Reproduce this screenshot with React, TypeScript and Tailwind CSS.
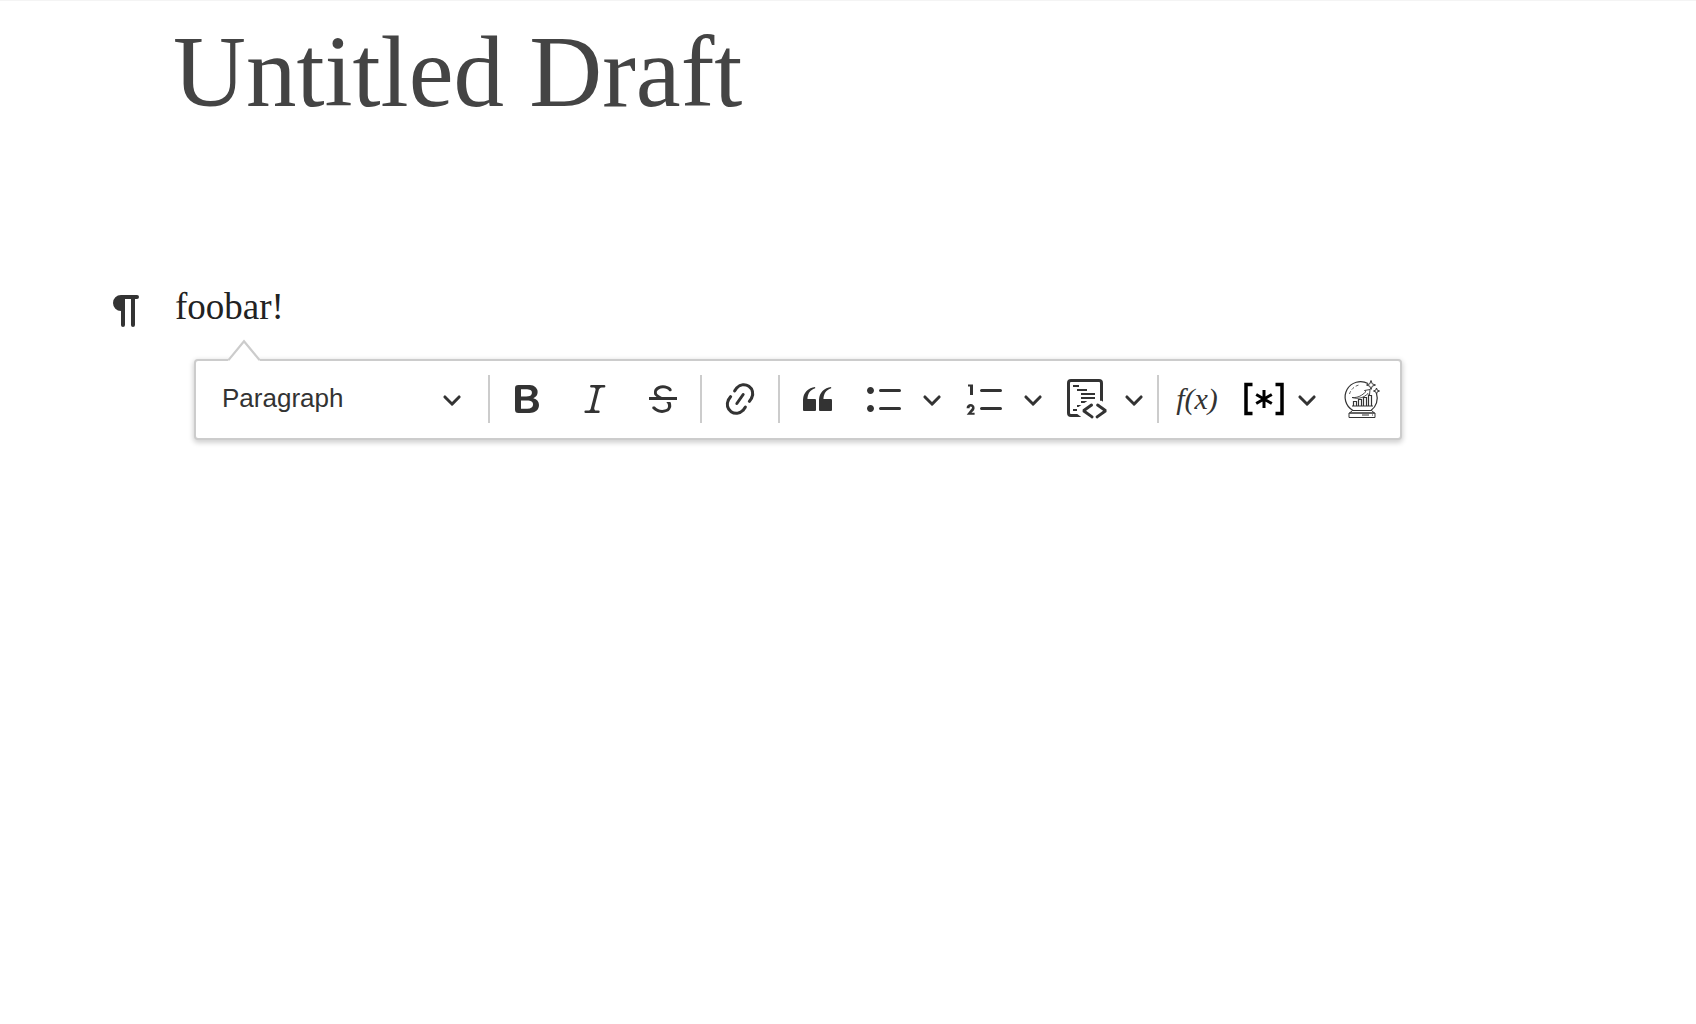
import type { ReactNode } from "react";

const LIST_LINES =
  "M7 5.75c0 .414.336.75.75.75h9.5a.75.75 0 1 0 0-1.5h-9.5a.75.75 0 0 0-.75.75zm0 9c0 .414.336.75.75.75h9.5a.75.75 0 1 0 0-1.5h-9.5a.75.75 0 0 0-.75.75z";

const PATHS = {
  pilcrow:
    "M6.999 2H15a1 1 0 0 1 0 2h-1.004v13a1 1 0 1 1-2 0V4H8.999v13a1 1 0 1 1-2 0v-7A4 4 0 0 1 3 6a4 4 0 0 1 3.999-4z",
  bold: "M10.187 17H5.773c-.637 0-1.092-.138-1.364-.415-.273-.277-.409-.718-.409-1.323V4.738c0-.617.14-1.062.419-1.332.279-.27.73-.406 1.354-.406h4.68c.69 0 1.288.041 1.793.124.506.083.96.242 1.36.478.341.197.644.447.906.75a3.262 3.262 0 0 1 .808 2.162c0 1.401-.722 2.426-2.167 3.075C15.05 10.175 16 11.315 16 13.01a3.756 3.756 0 0 1-2.296 3.504 6.1 6.1 0 0 1-1.517.377c-.571.073-1.238.11-2 .11zm-.217-6.217H7v4.087h3.069c1.977 0 2.965-.69 2.965-2.072 0-.707-.256-1.22-.768-1.537-.512-.319-1.277-.478-2.296-.478zM7 5.13v3.619h2.606c.729 0 1.292-.067 1.69-.2a1.6 1.6 0 0 0 .91-.765c.165-.267.247-.566.247-.897 0-.707-.26-1.176-.778-1.409-.519-.232-1.31-.348-2.375-.348H7z",
  italic:
    "m9.586 14.633.021.004c-.036.335.095.655.393.962.082.083.173.15.274.201h1.474a.6.6 0 1 1 0 1.2H5.304a.6.6 0 0 1 0-1.2h1.15c.474-.07.809-.182 1.005-.334.157-.122.291-.32.404-.597l2.416-9.55a1.053 1.053 0 0 0-.281-.823 1.12 1.12 0 0 0-.442-.296H8.15a.6.6 0 0 1 0-1.2h6.443a.6.6 0 1 1 0 1.2h-1.195c-.376.056-.65.155-.823.296-.215.175-.423.439-.623.79l-2.366 9.347z",
  strike:
    "M7 16.4c-.8-.4-1.5-.9-2.2-1.5a.6.6 0 0 1-.2-.5l.3-.6h1c1 1.2 2.1 1.7 3.7 1.7 1 0 1.8-.3 2.3-.6.6-.4.6-1.2.6-1.3.2-1.2-.9-2.1-.9-2.1h2.1c.3.7.4 1.2.4 1.7v.8l-.6 1.2c-.6.8-1.1 1-1.6 1.2a6 6 0 0 1-2.4.6c-1 0-1.8-.3-2.5-.6zM6.8 9L6 8.3c-.4-.5-.5-.8-.5-1.6 0-.7.1-1.3.5-1.8.4-.6 1-1 1.6-1.3a6.3 6.3 0 0 1 4.7 0 4 4 0 0 1 1.7 1l.3.7c0 .1.2.4-.2.7-.4.2-.9.1-1 0a3 3 0 0 0-1.2-1c-.4-.2-1-.3-2-.4-.7 0-1.4.2-2 .6-.8.6-1 .8-1 1.5 0 .8.5 1 1.2 1.5.6.4 1.1.7 1.9 1H6.8zM3 10.5V9h14v1.5z",
  link: "m11.077 15 .991-1.416a.75.75 0 1 1 1.229.86l-1.148 1.64a.748.748 0 0 1-.217.206 5.251 5.251 0 0 1-8.503-5.955.741.741 0 0 1 .12-.274l1.147-1.639a.75.75 0 1 1 1.228.86L4.933 10.7l.006.003a3.75 3.75 0 0 0 6.132 4.294l.006.004zm5.494-5.335a.748.748 0 0 1-.12.274l-1.147 1.639a.75.75 0 1 1-1.228-.86l.86-1.23a3.75 3.75 0 0 0-6.144-4.301l-.86 1.229a.75.75 0 0 1-1.229-.86l1.148-1.64a.748.748 0 0 1 .217-.206 5.251 5.251 0 0 1 8.503 5.955zm-4.563-2.532a.75.75 0 0 1 .184 1.045l-3.155 4.505a.75.75 0 1 1-1.229-.86l3.155-4.506a.75.75 0 0 1 1.045-.184z",
  quote:
    "M3 10.423a6.5 6.5 0 0 1 6.056-6.408l.038.67C6.448 5.423 5.354 7.663 5.22 10H9c.552 0 .5.432.5.986v4.511c0 .554-.448.503-1 .503h-5c-.552 0-.5-.449-.5-1.003v-4.574zm8 0a6.5 6.5 0 0 1 6.056-6.408l.038.67c-2.646.739-3.74 2.979-3.873 5.315H17c.552 0 .5.432.5.986v4.511c0 .554-.448.503-1 .503h-5c-.552 0-.5-.449-.5-1.003v-4.574z",
  bullets:
    LIST_LINES +
    "M1 5.75C1 4.784 1.777 4 2.75 4c.966 0 1.75.777 1.75 1.75 0 .966-.777 1.75-1.75 1.75C1.784 7.5 1 6.723 1 5.75zm0 9c0-.966.777-1.75 1.75-1.75.966 0 1.75.777 1.75 1.75 0 .966-.777 1.75-1.75 1.75-.966 0-1.75-.777-1.75-1.75z",
  numbers:
    LIST_LINES +
    "M3.5 3v5H2V3.7H1v-1h2.5V3zM.343 17.857l2.59-3.257H2.92a.6.6 0 1 0-1.04 0H.302a2 2 0 1 1 3.995 0h-.001c-.048.405-.16.734-.333.988-.175.254-.59.692-1.244 1.312H4.3v1h-4l.043-.043z",
  code: "M12.87 12.61a.75.75 0 0 1-.089.976l-.085.07-3.154 2.254 3.412 2.414a.75.75 0 0 1 .237.95l-.057.095a.75.75 0 0 1-.95.237l-.096-.058-4.272-3.022-.003-1.223 4.01-2.867a.75.75 0 0 1 1.047.174zm2.795-.231.095.057 4.011 2.867-.003 1.223-4.272 3.022-.095.058a.75.75 0 0 1-.88-.151l-.07-.086-.058-.095a.75.75 0 0 1 .15-.88l.087-.07 3.412-2.414-3.154-2.253-.085-.071a.75.75 0 0 1 .862-1.207zM16 0a2 2 0 0 1 2 2v9.354l-.663-.492-.837-.001V2a.5.5 0 0 0-.5-.5H2a.5.5 0 0 0-.5.5v15a.5.5 0 0 0 .5.5h3.118L7.156 19H2a2 2 0 0 1-2-2V2a2 2 0 0 1 2-2h14zM5.009 15l.003 1H3v-1h2.009zm2.188-2-1.471 1H5v-1h2.197zM10 11v.095L8.668 12H7v-1h3zm4-2v1H7V9h7zm0-2v1H7V7h7zm-4-2v1H5V5h5zM6 3v1H3V3h3z",
};

function Icon({ name }: { name: keyof typeof PATHS }) {
  return (
    <svg viewBox="0 0 20 20" className="size-10 shrink-0" fill="currentColor" aria-hidden="true">
      <path d={PATHS[name]} />
    </svg>
  );
}

function Chevron() {
  return (
    <svg viewBox="0 0 10 10" className="size-5 shrink-0" fill="currentColor" aria-hidden="true">
      <path d="M.941 4.523a.75.75 0 1 1 1.06-1.06l3.006 3.005 3.005-3.005a.75.75 0 1 1 1.06 1.06l-3.549 3.55a.75.75 0 0 1-1.168-.136L.941 4.523z" />
    </svg>
  );
}

function CrystalBall() {
  return (
    <svg viewBox="0 0 40 40" className="size-10" fill="none" stroke="currentColor" strokeWidth="1.2" aria-hidden="true">
      <path d="M11 31.500A15.200 15.200 0 1 1 26 4.600M34.500 14.500a15.200 15.200 0 0 1-5.500 17" />
      <path d="M7.500 15A13 13 0 0 1 17 6" strokeWidth=".8" strokeDasharray="3 2" />
      <path d="M10.500 31.500h19l3 2.500H7.500zM7 34h26v4.500H7zM20 36h7M30 36h1" strokeWidth="1" />
      <path d="M10 27h21M11.500 27v-4.500h3V27M16.500 27v-6.500h3V27M21.500 27v-8.500h3V27M26.500 27V16.500h3V27" />
      <path d="M10 18.500c6 .5 10-2 14-6l-1.500-1 5.500-1-.5 5.500-1.500-1.500c-4 4-9 6-16 4z" strokeWidth=".9" />
      <path d="M29 1.500l1.200 3.300 3.300 1.200-3.300 1.200L29 10.500l-1.200-3.300L24.500 6l3.300-1.200zM34.500 9l.8 2.200 2.200.8-2.200.8-.8 2.200-.8-2.200-2.200-.8 2.200-.8z" strokeWidth="1" />
    </svg>
  );
}

function ToolButton({ label, children }: { label: string; children: ReactNode }) {
  return (
    <button type="button" aria-label={label} className="flex h-[68px] w-[68px] shrink-0 items-center justify-center">
      {children}
    </button>
  );
}

function SplitButton({ label, children }: { label: string; children: ReactNode }) {
  return (
    <div className="mr-[7px] flex">
      <ToolButton label={label}>{children}</ToolButton>
      <button type="button" aria-label={label + " options"} className="flex w-[26px] items-center justify-center">
        <Chevron />
      </button>
    </div>
  );
}

function Separator() {
  return <div role="separator" className="h-12 w-[2px] shrink-0 bg-[#cccccc]" />;
}

export default function App() {
  return (
    <main className="min-h-screen border-t border-[#f4f4f4] bg-white pt-[21px] text-[#333333]">
      <h1 className="pl-[173px] font-['Liberation_Serif',serif] text-[101px] leading-[100px] text-[#444444]">
        Untitled Draft
      </h1>

      <div className="mt-[161px] flex pl-[107px]">
        <div className="mt-2 h-10 w-10">
          <Icon name="pilcrow" />
        </div>
        <p className="ml-[28px] font-['Liberation_Serif',serif] text-[37px] leading-[48px] text-[#222222]">foobar!</p>
      </div>

      <div className="mt-7 flex pl-[194px]">
        <div
          role="toolbar"
          aria-label="Editor toolbar"
          className="relative flex h-[81px] items-center rounded border-2 border-[#cccccc] bg-white pb-px shadow-[0_2px_5px_1px_rgba(0,0,0,0.18)]"
        >
          <svg viewBox="0 0 32 22" className="absolute -top-[22px] left-8 h-[22px] w-8" aria-hidden="true">
            <path d="M0 22 16 2 32 22z" fill="white" />
            <path d="M.5 21 16 2.200 31.500 21" fill="none" stroke="#cccccc" strokeWidth="2.200" />
          </svg>

          <label className="relative flex h-[68px] w-[292px] items-center">
            <select
              aria-label="Heading"
              className="h-full w-full appearance-none bg-transparent pb-[2px] pl-[26px] font-['Liberation_Sans',sans-serif] text-[26px] leading-8 outline-none"
            >
              <option>Paragraph</option>
              <option>Heading 1</option>
              <option>Heading 2</option>
            </select>
            <span className="pointer-events-none absolute right-[26px]">
              <Chevron />
            </span>
          </label>
          <Separator />

          <div className="flex px-[3px]">
            <ToolButton label="Bold">
              <Icon name="bold" />
            </ToolButton>
            <ToolButton label="Italic">
              <Icon name="italic" />
            </ToolButton>
            <ToolButton label="Strikethrough">
              <Icon name="strike" />
            </ToolButton>
          </div>
          <Separator />

          <div className="flex px-1">
            <ToolButton label="Link">
              <Icon name="link" />
            </ToolButton>
          </div>
          <Separator />

          <div className="flex px-[3px]">
            <ToolButton label="Block quote">
              <Icon name="quote" />
            </ToolButton>
            <SplitButton label="Bulleted list">
              <Icon name="bullets" />
            </SplitButton>
            <SplitButton label="Numbered list">
              <Icon name="numbers" />
            </SplitButton>
            <SplitButton label="Code block">
              <Icon name="code" />
            </SplitButton>
          </div>
          <Separator />

          <div className="flex px-1">
            <ToolButton label="Math">
              <span className="font-['Liberation_Serif',serif] text-[30px] leading-8 italic">f(x)</span>
            </ToolButton>
            <button type="button" aria-label="Footnote" className="flex h-[68px] w-[97px] items-center gap-[13px] pl-[13px] text-black">
              <svg viewBox="0 0 40 40" className="size-10 shrink-0" fill="none" stroke="currentColor" aria-hidden="true">
                <path d="M8.500 5.500H2v29h6.500M31.500 5.500H38v29h-6.500" strokeWidth="3.500" />
                <path d="M20 11v18M12.200 15.500l15.600 9M27.800 15.500l-15.600 9" strokeWidth="3" />
              </svg>
              <span className="text-[#333333]">
                <Chevron />
              </span>
            </button>
            <ToolButton label="Forecast">
              <CrystalBall />
            </ToolButton>
          </div>
        </div>
      </div>
    </main>
  );
}
